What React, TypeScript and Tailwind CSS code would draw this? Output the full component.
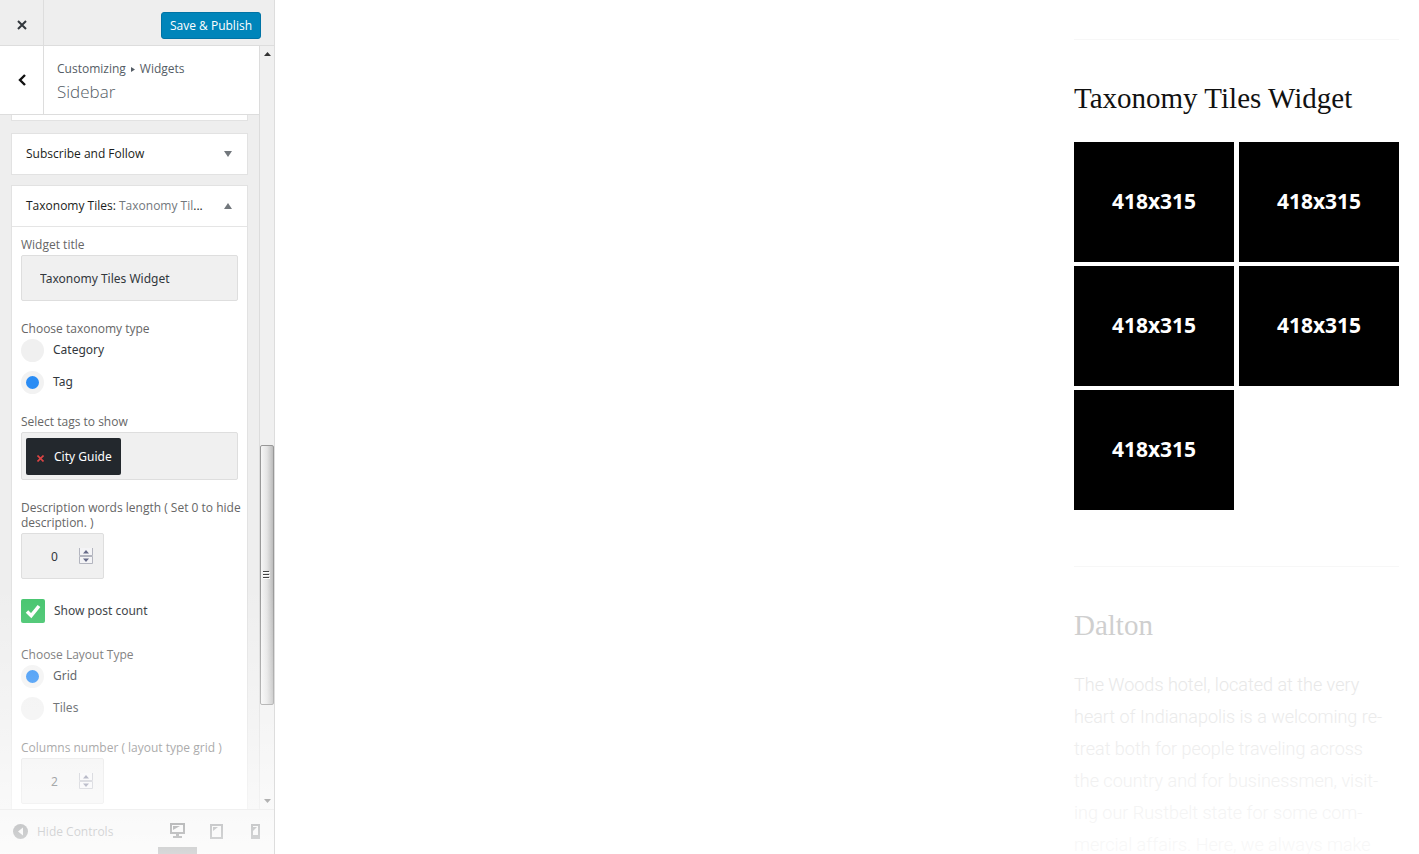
import type { ReactNode } from "react";

function FieldLabel({ children, htmlFor }: { children: ReactNode; htmlFor: string }) {
  return (
    <label htmlFor={htmlFor} className="block font-['Open_Sans',sans-serif] text-xs leading-[15px] whitespace-nowrap text-[#666]">
      {children}
    </label>
  );
}

function RadioGroup({
  legend,
  name,
  options,
  selected,
}: {
  legend: string;
  name: string;
  options: string[];
  selected: string;
}) {
  return (
    <fieldset>
      <legend className="font-['Open_Sans',sans-serif] text-xs leading-[15px] text-[#666]">{legend}</legend>
      <div className="mt-0.5 flex flex-col gap-2">
        {options.map((option) => (
          <label key={option} className="flex h-6 items-center gap-[9px] text-[#32373c]">
            <input
              type="radio"
              name={name}
              defaultChecked={option === selected}
              className="size-[23px] appearance-none rounded-full border-[#f2f2f2] bg-[#f0f0f0] checked:border-[5px] checked:bg-[#2a8cf4]"
            />
            {option}
          </label>
        ))}
      </div>
    </fieldset>
  );
}

function NumberField({ id, label, value }: { id: string; label: ReactNode; value: number }) {
  return (
    <div>
      <FieldLabel htmlFor={id}>{label}</FieldLabel>
      <div className="mt-[3px] flex h-[46px] w-[83px] items-center rounded-xs border border-[#dedede] bg-[#f0f0f0] pr-2.5">
        <input
          id={id}
          type="number"
          defaultValue={value}
          className="min-w-0 flex-1 bg-transparent pt-0.5 pl-[29px] text-[#32373c] outline-none [appearance:textfield] [&::-webkit-inner-spin-button]:appearance-none"
        />
        <svg width="14" height="16" viewBox="0 0 14 16" aria-hidden="true">
          <path d="M.5 0v7.500h13V0M.5 15.500v-7h13v7z" fill="#f4f4f6" stroke="#b3b5bf" />
          <path d="M4 5.500 7 2l3 3.500zM4 10.500h6L7 14z" fill="#666a88" />
        </svg>
      </div>
    </div>
  );
}

function CollapsedWidget({ title }: { title: string }) {
  return (
    <section className="border border-[#e2e2e2] bg-white">
      <h3>
        <button type="button" className="flex h-10 w-full items-center justify-between pl-3.5 pr-[15px] font-['Open_Sans',sans-serif] font-medium text-[#1a1d20]">
          {title}
          <svg width="8" height="6" viewBox="0 0 8 6" aria-hidden="true">
            <path d="M0 0h8L4 6z" fill="#72777c" />
          </svg>
        </button>
      </h3>
    </section>
  );
}

function TaxonomyWidget() {
  return (
    <section className="border border-[#e2e2e2] bg-white">
      <h3 className="border-b border-[#e5e5e5]">
        <button type="button" className="flex h-10 w-full items-center justify-between pl-3.5 pr-[15px] font-['Open_Sans',sans-serif] font-medium text-[#1a1d20]">
          <span>
            Taxonomy Tiles: <span className="text-[#72777c]">Taxonomy Til</span>...
          </span>
          <svg width="8" height="6" viewBox="0 0 8 6" aria-hidden="true">
            <path d="M0 6h8L4 0z" fill="#72777c" />
          </svg>
        </button>
      </h3>
      <form className="flex flex-col gap-5 px-[9px] pt-2.5 pb-4">
        <div>
          <FieldLabel htmlFor="widget-title">Widget title</FieldLabel>
          <input
            id="widget-title"
            type="text"
            defaultValue="Taxonomy Tiles Widget"
            className="mt-[3px] block h-[46px] w-full rounded-xs border border-[#dedede] bg-[#f0f0f0] px-[18px] text-[#32373c]"
          />
        </div>
        <RadioGroup legend="Choose taxonomy type" name="taxonomy" options={["Category", "Tag"]} selected="Tag" />
        <div>
          <FieldLabel htmlFor="tag-remove">Select tags to show</FieldLabel>
          <div className="mt-[3px] flex h-12 items-center rounded-xs border border-[#dedede] bg-[#f0f0f0] px-1">
            <span className="flex h-[37px] items-center gap-2.5 rounded-xs bg-[#23282d] pt-0.5 pr-[9px] pl-[11px] text-white">
              <button id="tag-remove" type="button" aria-label="Remove City Guide" className="pt-0.5">
                <svg width="7" height="7" viewBox="0 0 7 7">
                  <path d="m.5.5 6 6m0-6-6 6" stroke="#dd4444" strokeWidth="1.600" />
                </svg>
              </button>
              City Guide
            </span>
          </div>
        </div>
        <NumberField
          id="words"
          label={
            <>
              Description words length ( Set 0 to hide
              <br />
              description. )
            </>
          }
          value={0}
        />
        <label className="mb-1 flex h-6 items-center gap-[9px] text-[#32373c]">
          <span className="grid size-6">
            <input type="checkbox" defaultChecked className="col-start-1 row-start-1 size-6 appearance-none rounded-xs bg-[#43c46c]" />
            <svg className="pointer-events-none col-start-1 row-start-1" width="24" height="24" viewBox="0 0 24 24" aria-hidden="true">
              <path d="m6 12.500 4.200 4.200L18 7" fill="none" stroke="#fff" strokeWidth="3.500" />
            </svg>
          </span>
          Show post count
        </label>
        <RadioGroup legend="Choose Layout Type" name="layout" options={["Grid", "Tiles"]} selected="Grid" />
        <NumberField id="columns" label="Columns number ( layout type grid )" value={2} />
      </form>
    </section>
  );
}

function Scrollbar() {
  return (
    <div className="flex w-[15px] shrink-0 flex-col items-center border-l border-[#dcdcdc] bg-[#f0f0f0] py-1.5" aria-hidden="true">
      <svg width="7" height="4" viewBox="0 0 7 4">
        <path d="M0 4h7L3.500 0z" fill="#333" />
      </svg>
      <div className="flex-[387]" />
      <div className="flex h-[260px] w-full shrink-0 items-center rounded-xs border border-[#989898] bg-linear-to-r from-[#f6f6f6] via-[#e4e4e4] to-[#bcbcbc] pl-0.5">
        <svg width="7" height="8" viewBox="0 0 7 8">
          <path d="M0 .5h6M0 3.500h6M0 6.500h6" stroke="#444" />
          <path d="M0 1.500h7M0 4.500h7M0 7.500h7" stroke="#fff" />
        </svg>
      </div>
      <div className="flex-[93]" />
      <svg width="7" height="4" viewBox="0 0 7 4">
        <path d="M0 0h7L3.500 4z" fill="#333" />
      </svg>
    </div>
  );
}

function Customizer() {
  return (
    <aside className="relative flex w-[275px] shrink-0 flex-col border-r border-[#dddddd] bg-[#eeeeee] font-['Noto_Sans',sans-serif] text-xs">
      <header className="flex h-[46px] shrink-0 items-center justify-between border-b border-[#ddd]">
        <button type="button" aria-label="Close" className="grid h-full w-11 place-items-center border-r border-[#ddd] pt-1">
          <svg width="10" height="10" viewBox="0 0 10 10">
            <path d="m1 1 8 8m0-8-8 8" stroke="#32373c" strokeWidth="2" />
          </svg>
        </button>
        <button type="button" className="mt-1.5 mr-[13px] h-[27px] rounded-[3px] border border-[#0073a5] bg-[#0085ba] px-2 font-['Open_Sans',sans-serif] font-medium text-white">
          Save &amp; Publish
        </button>
      </header>
      <div className="flex min-h-0 flex-1">
        <div className="flex min-w-0 flex-1 flex-col">
          <div className="flex h-[69px] shrink-0 border-b border-[#ddd] bg-white">
            <button type="button" aria-label="Back" className="grid w-11 place-items-center border-r border-[#ddd]">
              <svg width="8" height="12" viewBox="0 0 8 12">
                <path d="M7 1 2 6l5 5" fill="none" stroke="#111" strokeWidth="2.400" />
              </svg>
            </button>
            <div className="pt-[15px] pl-[13px] font-['Open_Sans',sans-serif] text-[#555d66]">
              <p className="flex items-center gap-[5px] leading-4">
                Customizing
                <svg width="4" height="5" viewBox="0 0 4 5" aria-hidden="true">
                  <path d="M0 0v5l4-2.500z" fill="#555d66" />
                </svg>
                <span>Widgets</span>
              </p>
              <h2 className="mt-[3px] text-[17px] leading-6 font-light">Sidebar</h2>
            </div>
          </div>
          <div className="min-h-0 flex-1 overflow-hidden px-[11px]">
            <div className="h-1.5 border border-t-0 border-[#e2e2e2] bg-white" />
            <div className="mt-3 flex flex-col gap-2.5">
              <CollapsedWidget title="Subscribe and Follow" />
              <TaxonomyWidget />
            </div>
          </div>
        </div>
        <Scrollbar />
      </div>
      <footer className="flex h-[45px] shrink-0 items-stretch justify-between border-t border-[#d4d4d4] text-[#5d6166]">
        <button type="button" className="flex items-center gap-[9px] pl-[13px] font-['Open_Sans',sans-serif]">
          <svg className="-mt-0.5" width="15" height="15" viewBox="0 0 15 15" aria-hidden="true">
            <circle cx="7.500" cy="7.500" r="7.500" fill="#44484c" />
            <path d="M10 3.500v8l-5-4z" fill="#eee" />
          </svg>
          Hide Controls
        </button>
        <div className="flex">
          <button type="button" aria-label="Desktop" className="grid w-[39px] place-items-center border-b-[7px] border-[#3c4043] pt-1">
            <svg width="15" height="15" viewBox="0 0 15 15">
              <path fillRule="evenodd" d="M0 0h15v11H9v2h3v2H3v-2h3v-2H0zM2 2v7h11V2z" fill="#1d2023" />
              <path d="M3 3h7L3 7z" fill="#1d2023" />
            </svg>
          </button>
          <button type="button" aria-label="Tablet" className="grid w-[39px] place-items-center pb-0.5">
            <svg width="13" height="15" viewBox="0 0 13 15">
              <path d="M1 1h11v13H1z" fill="none" stroke="#4b4f53" strokeWidth="2" />
              <path d="M3 3h5L3 7z" fill="#4b4f53" />
            </svg>
          </button>
          <button type="button" aria-label="Phone" className="grid w-[38px] place-items-center pb-0.5">
            <svg width="9" height="15" viewBox="0 0 9 15">
              <path fillRule="evenodd" d="M0 0h9v15H0zM2 2v9h5V2z" fill="#4b4f53" />
              <path d="M2 3h4L2 7z" fill="#4b4f53" />
            </svg>
          </button>
        </div>
      </footer>
      <div className="pointer-events-none absolute inset-x-0 bottom-0 h-[270px] bg-linear-to-b from-white/0 via-white/35 to-white/80" />
    </aside>
  );
}

const TILES = [1, 2, 3, 4, 5];

const STORY = [
  "The Woods hotel, located at the very",
  "heart of Indianapolis is a welcoming re-",
  "treat both for people traveling across",
  "the country and for businessmen, visit-",
  "ing our Rustbelt state for some com-",
  "mercial affairs. Here, we always make",
];

function Preview() {
  return (
    <main className="flex min-w-0 flex-1 justify-end overflow-hidden bg-white pr-5">
      <div className="w-[325px] pt-[39px]">
        <section className="border-t border-[#f7f7f7] pt-[38px]">
          <h2 className="font-['Liberation_Serif',serif] text-[29px] leading-10 text-[#111]">Taxonomy Tiles Widget</h2>
          <div className="mt-6 grid grid-cols-2 gap-x-[5px] gap-y-1">
            {TILES.map((tile) => (
              <a
                key={tile}
                href="#tile"
                className="grid h-[120px] place-items-center bg-black font-['Noto_Sans',sans-serif] text-[21px] font-bold text-white"
              >
                418x315
              </a>
            ))}
          </div>
        </section>
        <section className="relative mt-14 border-t border-[#f7f7f7] pt-[38px]">
          <h2 className="font-['Liberation_Serif',serif] text-[29px] leading-10 text-[#cfcfcf]">Dalton</h2>
          <p className="mt-6 font-['Roboto',sans-serif] text-lg leading-8 font-light whitespace-nowrap text-[#e6e6e6]">
            {STORY.map((line) => (
              <span key={line} className="block">
                {line}
              </span>
            ))}
          </p>
          <div className="pointer-events-none absolute inset-x-0 top-24 bottom-0 bg-linear-to-b from-white/0 to-white/75" />
        </section>
      </div>
    </main>
  );
}

export default function App() {
  return (
    <div className="flex h-screen overflow-hidden bg-white">
      <Customizer />
      <Preview />
    </div>
  );
}
